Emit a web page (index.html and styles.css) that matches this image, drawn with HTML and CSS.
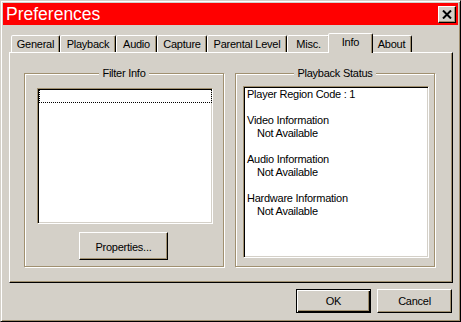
FILE: index.html
```html
<!DOCTYPE html>
<html>
<head>
  <title>Preferences</title>
  <link rel="stylesheet" href="styles.css">
</head>
<body>
  <div class="window">
    <div class="titlebar">
      <span class="title">Preferences</span>
      <button class="close-btn" type="button">
        <svg width="10" height="9" viewBox="0 0 10 9"><path d="M1 0.5 L9 8.5 M9 0.5 L1 8.5" stroke="#000" stroke-width="2" fill="none"/></svg>
      </button>
    </div>

    <div class="tabs">
      <div class="tab">General</div>
      <div class="tab">Playback</div>
      <div class="tab">Audio</div>
      <div class="tab">Capture</div>
      <div class="tab">Parental Level</div>
      <div class="tab">Misc.</div>
      <div class="tab active">Info</div>
      <div class="tab">About</div>
    </div>

    <div class="tab-panel">
      <div class="group filter-group">
        <span class="group-label">Filter Info</span>
        <div class="listbox">
          <div class="list-focus"></div>
        </div>
        <button class="btn props-btn" type="button">Properties...</button>
      </div>

      <div class="group status-group">
        <span class="group-label">Playback Status</span>
        <div class="status-box">
          <div class="line">Player Region Code : 1</div>
          <div class="line">&nbsp;</div>
          <div class="line">Video Information</div>
          <div class="line indent">Not Available</div>
          <div class="line">&nbsp;</div>
          <div class="line">Audio Information</div>
          <div class="line indent">Not Available</div>
          <div class="line">&nbsp;</div>
          <div class="line">Hardware Information</div>
          <div class="line indent">Not Available</div>
        </div>
      </div>
    </div>

    <div class="footer">
      <button class="btn default-btn" type="button">OK</button>
      <button class="btn" type="button">Cancel</button>
    </div>
  </div>
</body>
</html>
```

FILE: styles.css
```css
/* classic dialog look */
* {
  box-sizing: border-box;
}

body {
  margin: 0;
  font-family: "Liberation Sans", Arial, sans-serif;
  font-size: 11px;
  letter-spacing: -0.25px;
  color: #000;
  background-color: #d4d0c8;
}

.window {
  width: 461px;
  height: 322px;
  background-color: #d4d0c8;
  border: 1px solid;
  border-color: #d4d0c8 #000 #000 #d4d0c8;
  box-shadow: inset 1px 1px #fff, inset -1px -1px #a09070;
  padding: 2px;
  display: flex;
  flex-direction: column;
}

.titlebar {
  height: 22px;
  background-color: #ff0000;
  display: flex;
  align-items: center;
  padding-left: 3px;
  padding-right: 2px;
}

.title {
  color: #fff;
  font-size: 17.5px;
  letter-spacing: 0;
  line-height: 22px;
}

.close-btn {
  margin-left: auto;
  width: 18px;
  height: 17px;
  padding: 0;
  background-color: #d4d0c8;
  border: 1px solid;
  border-color: #fff #000 #000 #fff;
  box-shadow: inset -1px -1px #a09070;
  display: flex;
  align-items: center;
  justify-content: center;
}

.close-btn svg {
  display: block;
  margin-top: 1px;
}

/* tab strip */
.tabs {
  margin-top: 8px;
  margin-left: 8px;
  height: 19px;
  display: grid;
  grid-template-columns: 49px 56px 41px 50px 80px 43px 41px 41px;
  align-items: end;
}

.tab {
  height: 17px;
  border: 1px solid;
  border-bottom: none;
  border-color: #fff #000 transparent #fff;
  border-radius: 2px 2px 0 0;
  box-shadow: inset -1px 0 #a09070;
  background-color: #d4d0c8;
  text-align: center;
  line-height: 15px;
  padding-top: 1px;
  white-space: nowrap;
}

.tab.active {
  height: 20px;
  margin: 0 -2px -1px;
  position: relative; /* keep it over the panel edge */
  z-index: 1;
}

.tab-panel {
  height: 231px;
  margin: 0 5px 0 6px;
  border: 1px solid;
  border-color: #fff #000 #000 #fff;
  box-shadow: inset -1px -1px #a09070;
  padding: 20px 17px 15px 14px;
  display: flex;
  gap: 11px;
}

.group {
  position: relative;
  width: 200px;
  height: 194px;
  border: 1px solid #a09070;
  box-shadow: inset 1px 1px #fff, 1px 1px #fff;
  display: flex;
  flex-direction: column;
}

.group-label {
  position: absolute;
  top: -7px;
  left: 0;
  right: 0;
  margin: 0 auto;
  width: max-content;
  padding: 0 3px;
  background-color: #d4d0c8;
  line-height: 13px;
}

.filter-group {
  padding: 14px 0 0 12px;
}

.listbox {
  width: 176px;
  height: 136px;
  background-color: #fff;
  border: 1px solid;
  border-color: #a09070 #fff #fff #a09070;
  box-shadow: inset 1px 1px #000, inset -1px -1px #d4d0c8;
  padding: 0 0 0 1px;
}

.list-focus {
  height: 14px;
  border: 1px dotted #000;
}

.status-group {
  padding: 12px 0 0 7px;
}

.status-box {
  width: 186px;
  height: 172px;
  background-color: #fff;
  border: 1px solid;
  border-color: #a09070 #fff #fff #a09070;
  box-shadow: inset 1px 1px #000, inset -1px -1px #d4d0c8;
  padding: 1px 0 0 3px;
}

.line {
  line-height: 13px;
  white-space: nowrap;
}

.line.indent {
  padding-left: 10px;
}

/* buttons */
.btn {
  font-family: "Liberation Sans", Arial, sans-serif;
  font-size: 11px;
  letter-spacing: -0.25px;
  color: #000;
  background-color: #d4d0c8;
  border: 1px solid;
  border-color: #fff #000 #000 #fff;
  box-shadow: inset -1px -1px #a09070;
  padding: 0;
  width: 75px;
  height: 24px;
}

.props-btn {
  width: 89px;
  height: 28px;
  margin-top: 8px;
  margin-left: 42px;
  padding-top: 1px;
}

.default-btn {
  border-color: #000;
  box-shadow: inset 1px 1px #fff, inset -1px -1px #000, inset -2px -2px #a09070;
}

.footer {
  margin-top: 6px;
  padding-right: 6px;
  display: flex;
  justify-content: flex-end;
  gap: 6px;
}
```
